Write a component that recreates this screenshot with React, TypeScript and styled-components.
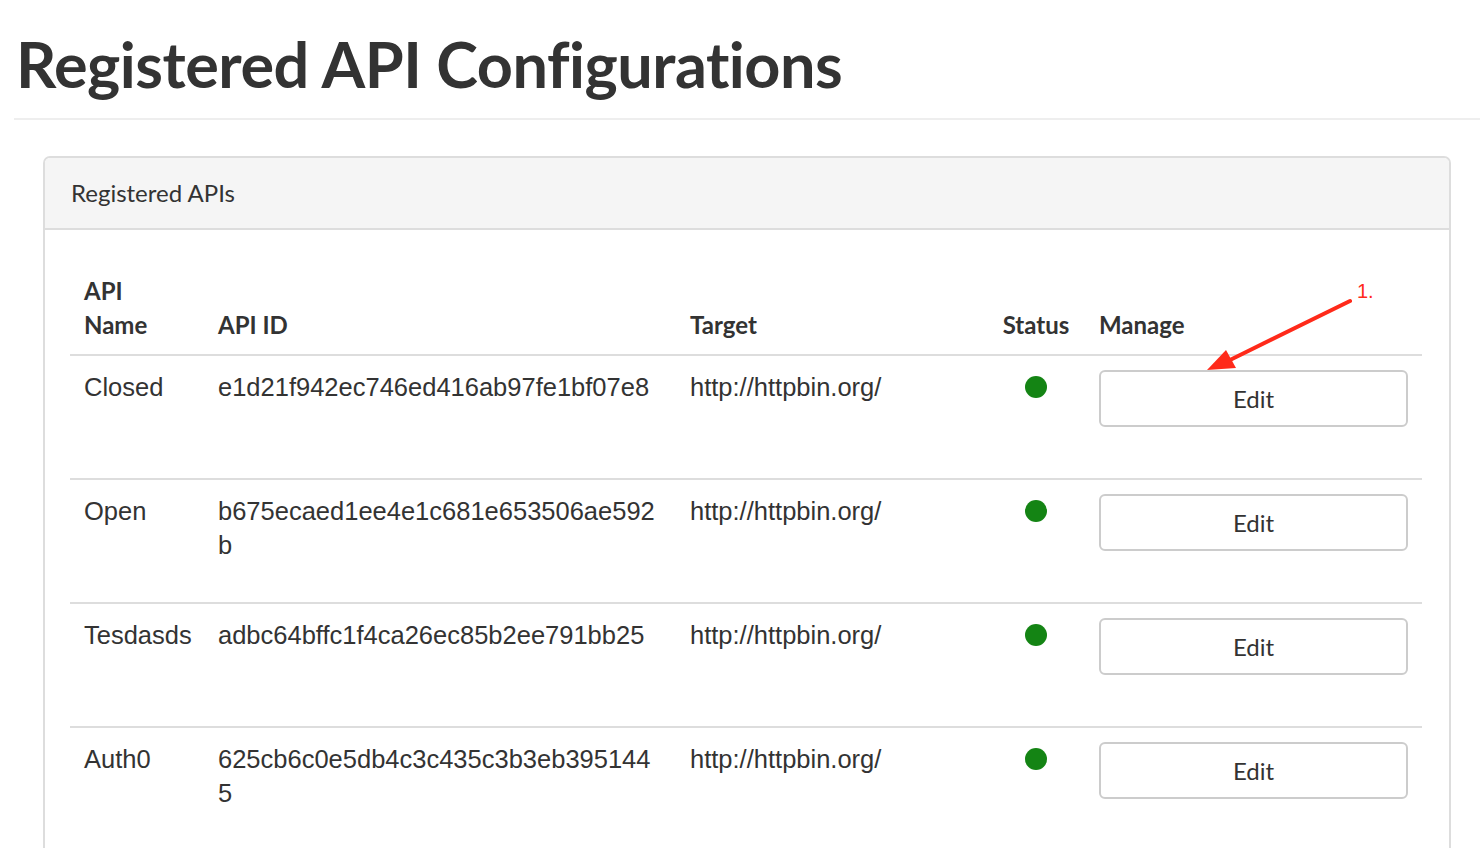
import React from 'react';
import styled, { createGlobalStyle } from 'styled-components';

const GlobalStyle = createGlobalStyle`
  html, body {
    margin: 0;
    padding: 0;
    background: #fff;
    color: #333;
    font-family: "Liberation Sans", Arial, sans-serif;
  }
`;

const Page = styled.div`
  width: 1480px;
  height: 848px;
  overflow: hidden;
  position: relative;
`;

const Title = styled.h1`
  margin: 0 0 0 14px;
  padding: 30px 0 20px 2px;
  font-family: Lato, "Open Sans", sans-serif;
  font-weight: 700;
  font-size: 63px;
  line-height: 68px;
  color: #333;
  letter-spacing: -0.5px;
`;

const Rule = styled.hr`
  margin: 0 0 0 14px;
  border: 0;
  border-top: 2px solid #eee;
`;

const Panel = styled.section`
  min-height: 760px;
  margin: 36px 29px 0 43px;
  border: 2px solid #ddd;
  border-bottom: 0;
  border-radius: 7px 7px 0 0;
`;

const PanelHeading = styled.div`
  height: 72px;
  padding: 0 26px;
  display: flex;
  align-items: center;
  background: #f5f5f5;
  border-bottom: 2px solid #ddd;
  border-radius: 5px 5px 0 0;
  font-family: Lato, "Open Sans", sans-serif;
  font-size: 24px;
  line-height: 28px;
  color: #333;
  box-sizing: border-box;
`;

const PanelBody = styled.div`
  padding: 30px 27px 0 25px;
`;

const Table = styled.table`
  width: 100%;
  border-collapse: collapse;
  table-layout: fixed;
`;

const Th = styled.th<{ $center?: boolean; $w: number }>`
  width: ${p => p.$w}px;
  padding: 14px 14px 12px;
  text-align: ${p => (p.$center ? 'center' : 'left')};
  vertical-align: bottom;
  font-family: Lato, "Open Sans", sans-serif;
  font-weight: 700;
  font-size: 24px;
  line-height: 34px;
  color: #333;
  border-bottom: 2px solid #ddd;
`;

const Row = styled.tr`
  height: 124px;
  & + & td {
    border-top: 2px solid #ddd;
  }
`;

const Td = styled.td<{ $center?: boolean; $breakAll?: boolean }>`
  padding: 14px 14px;
  vertical-align: top;
  text-align: ${p => (p.$center ? 'center' : 'left')};
  font-size: 25.5px;
  line-height: 34px;
  color: #333;
  word-break: ${p => (p.$breakAll ? 'break-all' : 'normal')};
  white-space: ${p => (p.$breakAll ? 'normal' : 'nowrap')};
`;

const Dot = styled.span`
  display: inline-block;
  width: 22px;
  height: 22px;
  margin-top: 6px;
  border-radius: 50%;
  background: #148414;
`;

const EditButton = styled.button`
  display: block;
  width: 100%;
  height: 57px;
  margin-top: 0;
  background: #fff;
  border: 2px solid #ccc;
  border-radius: 6px;
  font-family: Lato, "Open Sans", sans-serif;
  font-size: 24px;
  color: #333;
  cursor: pointer;
`;

const Annotation = styled.svg`
  position: absolute;
  left: 1190px;
  top: 278px;
  pointer-events: none;
`;

const AnnotationLabel = styled.span`
  position: absolute;
  left: 1357px;
  top: 280px;
  font-family: "Liberation Sans", Arial, sans-serif;
  font-size: 20px;
  color: #ff2a1a;
`;

const apis = [
  { name: 'Closed', id: 'e1d21f942ec746ed416ab97fe1bf07e8', target: 'http://httpbin.org/' },
  { name: 'Open', id: 'b675ecaed1ee4e1c681e653506ae592b', target: 'http://httpbin.org/' },
  { name: 'Tesdasds', id: 'adbc64bffc1f4ca26ec85b2ee791bb25', target: 'http://httpbin.org/' },
  { name: 'Auth0', id: '625cb6c0e5db4c3c435c3b3eb3951445', target: 'http://httpbin.org/' },
];

export default function App() {
  return (
    <Page>
      <GlobalStyle />
      <Title>Registered API Configurations</Title>
      <Rule />
      <Panel>
        <PanelHeading>Registered APIs</PanelHeading>
        <PanelBody>
          <Table>
            <thead>
              <tr>
                <Th $w={106}>
                  API
                  <br />
                  Name
                </Th>
                <Th $w={444}>API ID</Th>
                <Th $w={283}>Target</Th>
                <Th $w={70} $center>
                  Status
                </Th>
                <Th $w={309}>Manage</Th>
              </tr>
            </thead>
            <tbody>
              {apis.map(api => (
                <Row key={api.id}>
                  <Td>{api.name}</Td>
                  <Td $breakAll>{api.id}</Td>
                  <Td>{api.target}</Td>
                  <Td $center>
                    <Dot />
                  </Td>
                  <Td>
                    <EditButton>Edit</EditButton>
                  </Td>
                </Row>
              ))}
            </tbody>
          </Table>
        </PanelBody>
      </Panel>
      <Annotation width="180" height="100" viewBox="0 0 180 100">
        <line x1="160" y1="23" x2="40" y2="82" stroke="#ff2a1a" strokeWidth="4" strokeLinecap="round" />
        <polygon points="17,92 36,72 46,90" fill="#ff2a1a" />
      </Annotation>
      <AnnotationLabel>1.</AnnotationLabel>
    </Page>
  );
}
